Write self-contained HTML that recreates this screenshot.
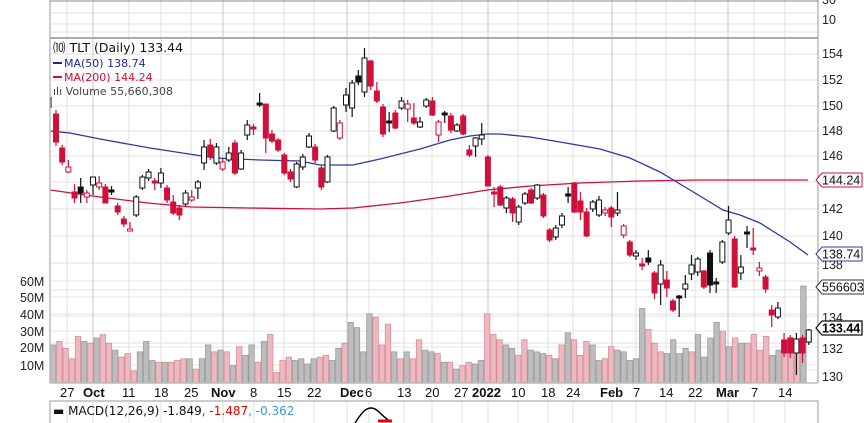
<!DOCTYPE html>
<html><head><meta charset="utf-8"><style>
html,body{margin:0;padding:0;background:#fff;width:864px;height:423px;overflow:hidden}
svg{display:block}
.ax{font-family:"Liberation Sans",Arial,sans-serif;font-size:12.5px;fill:#222}
.dt{font-family:"Liberation Sans",Arial,sans-serif;font-size:13px;fill:#111}
.lg{font-family:"DejaVu Sans",Verdana,sans-serif;font-size:11.5px}
</style></head><body>
<svg id="s" width="864" height="423" xmlns="http://www.w3.org/2000/svg">
<rect width="864" height="423" fill="#fff"/>
<g id="grid"></g>
<g id="vol"></g>
<polyline fill="none" stroke="#d0103a" stroke-width="1.3" points="50,190 100,197 148,203 191,207 250,208 320,209 353,208 400,203 450,196 487,190 530,186 580,183 640,181 700,180 808,180"/>
<polyline fill="none" stroke="#2a3aa0" stroke-width="1.3" points="50,131 70,133 100,139 150,148 215,158 260,160 300,161 320,165 353,165 380,159 420,149 450,140 470,136 487,134 500,134 530,137 560,142 600,149 630,158 660,172 690,190 723,210 740,215 760,223 790,242 808,255"/>
<g id="cd"></g>
<!-- frame -->
<line x1="50" y1="0" x2="50" y2="383" stroke="#bbb" stroke-width="1.5"/>
<line x1="818" y1="0" x2="818" y2="383" stroke="#999" stroke-width="1"/>
<line x1="50" y1="38" x2="818" y2="38" stroke="#aaa" stroke-width="2"/>
<line x1="50" y1="1" x2="818" y2="1" stroke="#888" stroke-width="1"/>
<line x1="50" y1="383" x2="818" y2="383" stroke="#bbb" stroke-width="1.5"/>
<rect x="50" y="401" width="768" height="30" fill="none" stroke="#bbb" stroke-width="1.5"/>
<!-- legend -->
<g class="lg">
<text x="53" y="52" fill="#111" style="font-size:12.5px">⑽ TLT (Daily) 133.44</text>
<rect x="53" y="62" width="9" height="2" fill="#1a2a9a"/><text x="64" y="67" fill="#1a2a9a" style="font-size:11px">MA(50) 138.74</text>
<rect x="53" y="76" width="9" height="2" fill="#d0103a"/><text x="64" y="81" fill="#d0103a" style="font-size:11px">MA(200) 144.24</text>
<text x="53" y="95" fill="#444" style="font-size:11px">ılı Volume 55,660,308</text>
</g>
<text class="lg" x="53" y="415" fill="#111" style="font-size:12px">▬ MACD(12,26,9) -1.849<tspan fill="#e00">, -1.487</tspan><tspan fill="#3a9ad8">, -0.362</tspan></text>
<path d="M355,423 C362,412 366,408 371,408 C377,408 380,414 388,420" fill="none" stroke="#000" stroke-width="1.5"/>
<path d="M378,421 L392,421" stroke="#e00" stroke-width="3"/>
<!-- right axis -->
<g class="ax">
<text x="822" y="4">30</text><text x="822" y="24">10</text>
<text x="822" y="58">154</text><text x="822" y="84">152</text><text x="822" y="110">150</text><text x="822" y="135">148</text><text x="822" y="160">146</text>
<text x="822" y="213">142</text><text x="822" y="240">140</text><text x="822" y="269">138</text><text x="822" y="322">134</text><text x="822" y="353">132</text><text x="822" y="381">130</text>
</g>
<g font-family="Liberation Sans,Arial,sans-serif" font-size="12.5">
<path d="M816,180 L822,173 L862,173 L862,187 L822,187 Z" fill="#fff" stroke="#d0103a"/><text x="822" y="184.5" fill="#111">144.24</text>
<path d="M816,254 L822,247 L862,247 L862,261 L822,261 Z" fill="#fff" stroke="#2a3aa0"/><text x="822" y="258.5" fill="#111">138.74</text>
<path d="M816,287 L822,280 L864,280 L864,294 L822,294 Z" fill="#fff" stroke="#333"/><text x="822" y="291.5" fill="#111">556603</text>
<path d="M816,328 L822,321 L862,321 L862,335 L822,335 Z" fill="#fff" stroke="#111" stroke-width="1.3"/><text x="822" y="332.5" fill="#000" font-weight="bold">133.44</text>
</g>
<!-- left vol axis -->
<g class="ax">
<text x="20" y="286">60M</text><text x="20" y="302">50M</text><text x="20" y="319">40M</text><text x="20" y="336">30M</text><text x="20" y="352">20M</text><text x="20" y="370">10M</text>
</g>
<!-- dates -->
<g class="dt">
<text x="60" y="397">27</text><text x="83" y="397" font-weight="bold">Oct</text><text x="122" y="397">11</text><text x="154" y="397">18</text><text x="184" y="397">25</text><text x="211" y="397" font-weight="bold">Nov</text><text x="250" y="397">8</text><text x="277" y="397">15</text><text x="307" y="397">22</text><text x="340" y="397" font-weight="bold">Dec</text><text x="365" y="397">6</text><text x="397" y="397">13</text><text x="425" y="397">20</text><text x="454" y="397">27</text><text x="472" y="397" font-weight="bold">2022</text><text x="511" y="397">10</text><text x="541" y="397">18</text><text x="566" y="397">24</text><text x="600" y="397" font-weight="bold">Feb</text><text x="633" y="397">7</text><text x="659" y="397">14</text><text x="688" y="397">22</text><text x="716" y="397" font-weight="bold">Mar</text><text x="751" y="397">7</text><text x="778" y="397">14</text>
</g>
</svg>
<script>
var NS="http://www.w3.org/2000/svg";
function el(p,t,a){var e=document.createElementNS(NS,t);for(var k in a)e.setAttribute(k,a[k]);p.appendChild(e);return e;}
var g=document.getElementById('grid');
[54,80,106,131,156,182,209,236,263,290,316,343,370].forEach(function(y){el(g,'line',{x1:50,x2:818,y1:y,y2:y,stroke:'#e2e2e2'});});
[13,24,32].forEach(function(y){el(g,'line',{x1:50,x2:818,y1:y,y2:y,stroke:'#e2e2e2'});});
[281,297,314,331,347,365].forEach(function(y){el(g,'line',{x1:50,x2:818,y1:y,y2:y,stroke:'#e6e6e6'});});
[67,93,129,161,191,223,254,284,314,347,369,404,432,462,488,518,548,573,612,636,666,695,728,754,785].forEach(function(x,i){
 var d=[93,223,347,488,612,728].indexOf(x)>=0;
 el(g,'line',{x1:x,x2:x,y1:0,y2:383,stroke:d?'#c8c8c8':'#e2e2e2'});
 el(g,'line',{x1:x,x2:x,y1:401,y2:423,stroke:'#e2e2e2'});});
var V="22g24p20p14p27p24g23p26g28p23p19g15p17p7p18g24g13g12p12g12p13p14p14g8p14g22g18p19g18p10g21p16g22g12p24g28p6p13p15p13g14g11g14g15p16p13g20g23p35g32g18g40g38p22p34p18g14p18g14p25p19g18g17p12g12p8g10p12p11g13g40p28p25p22g20g16p25p19g18g17g16p14g22p29g25p16p24p22g13g14p21p19g18g13g14g43g31p23p18p17g25g17g20g18p28g15g26g35g30p21g26p23g23p28p19p27p16g19g25p26p25p56g";
var re=/(\d+)([gp])/g,m,k=0,vg=document.getElementById('vol');
while((m=re.exec(V))){var h=m[1]*1.73,x=50+k*6.2;
 el(vg,'rect',{x:x+0.5,y:383-h,width:5.4,height:h,fill:m[2]=='g'?'#bdbdbd':'#ecb9c1',stroke:m[2]=='g'?'#9a9a9a':'#d98c98','stroke-width':0.8});k++;}
var C=[[114,142,110,146,'r'],[148,162,0,0,'r'],[167,172,160,173,'h'],[192,198,184,203,'r'],[187,193,178,203,'b'],[193,197,190,203,'h'],[177,185,177,195,'w'],[183,187,176,190,'h'],[187,203,184,203,'r'],[190,192,186,195,'b'],[206,212,0,0,'r'],[219,224,0,0,'r'],[229,230,222,231,'h'],[197,215,195,217,'w'],[177,188,175,190,'w'],[172,178,169,181,'w'],[181,183,178,190,'r'],[173,183,168,188,'w'],[188,200,0,0,'r'],[202,213,195,215,'r'],[208,215,205,220,'r'],[193,204,190,206,'w'],[197,200,190,202,'h'],[182,188,180,199,'w'],[147,163,140,170,'w'],[145,157,139,160,'r'],[147,163,143,165,'w'],[162,169,159,171,'h'],[153,160,147,162,'w'],[143,173,140,175,'r'],[153,169,150,170,'w'],[125,135,120,140,'w'],[127,129,124,135,'r'],[103,105,93,107,'b'],[104,138,104,153,'r'],[134,141,130,143,'r'],[140,150,138,152,'r'],[155,173,153,175,'r'],[172,179,0,0,'r'],[164,187,162,188,'w'],[157,167,154,170,'w'],[136,147,133,148,'w'],[147,160,0,0,'r'],[168,187,0,0,'r'],[157,182,155,183,'w'],[108,131,106,132,'w'],[123,138,120,140,'h'],[95,105,88,112,'w'],[83,108,80,117,'w'],[76,82,70,85,'b'],[58,92,48,97,'w'],[61,86,60,90,'r'],[91,101,82,103,'r'],[107,134,0,0,'r'],[121,123,112,132,'b'],[113,128,110,129,'r'],[101,108,97,110,'w'],[104,109,100,122,'h'],[118,123,103,125,'r'],[122,127,117,128,'w'],[100,106,98,108,'w'],[101,115,97,116,'r'],[122,135,120,142,'h'],[113,115,111,123,'b'],[116,130,0,0,'r'],[125,131,123,132,'w'],[116,134,114,135,'r'],[150,155,145,157,'r'],[138,146,137,157,'w'],[135,139,123,145,'w'],[157,186,155,186,'r'],[192,194,187,207,'r'],[187,205,185,206,'r'],[198,208,196,213,'w'],[199,213,197,222,'r'],[207,222,205,225,'w'],[194,203,192,205,'w'],[190,203,188,204,'r'],[185,198,184,200,'w'],[195,216,193,218,'r'],[230,240,228,242,'r'],[228,237,225,240,'w'],[216,225,213,228,'w'],[194,196,187,203,'b'],[183,212,182,213,'r'],[201,212,192,220,'r'],[212,236,208,237,'r'],[202,209,200,212,'w'],[200,215,196,217,'w'],[210,213,207,216,'h'],[208,217,206,227,'r'],[210,213,192,216,'w'],[226,235,224,238,'h'],[242,255,240,257,'r'],[253,256,250,260,'w'],[264,266,258,270,'r'],[258,262,250,265,'b'],[273,293,271,299,'r'],[265,284,260,305,'w'],[280,288,271,297,'r'],[301,310,299,312,'r'],[296,298,295,317,'b'],[284,289,275,298,'w'],[265,274,255,280,'w'],[259,272,257,276,'w'],[271,287,270,289,'r'],[253,285,250,293,'b'],[282,284,278,293,'b'],[242,262,240,264,'w'],[220,233,206,235,'w'],[239,287,236,288,'r'],[267,273,255,280,'w'],[232,234,226,248,'b'],[248,250,228,255,'r'],[268,271,262,276,'h'],[277,289,275,293,'r'],[310,315,305,327,'r'],[308,317,302,319,'w'],[340,353,333,357,'r'],[338,353,335,358,'r'],[339,353,333,375,'w'],[338,353,335,363,'r'],[330,342,329,345,'w']];
var cg=document.getElementById('cd');
el(cg,'line',{x1:51,x2:51,y1:97,y2:108,stroke:'#000'});
C.forEach(function(c,i){var x=56+i*6.17,t=c[0],b=c[1],wt=c[2]||t-3,wb=c[3]||b+3,ty=c[4];
 var col=(ty=='r'||ty=='h')?'#d0103a':'#111';
 el(cg,'line',{x1:x,x2:x,y1:wt,y2:wb,stroke:col,'stroke-width':1.2});
 var fill=ty=='r'?'#d0103a':ty=='b'?'#111':'#fff';
 if(b-t<2){b=t+2;}
 el(cg,'rect',{x:x-2.5,y:t,width:5,height:b-t,fill:fill,stroke:col,'stroke-width':1});});
</script>
</body></html>
